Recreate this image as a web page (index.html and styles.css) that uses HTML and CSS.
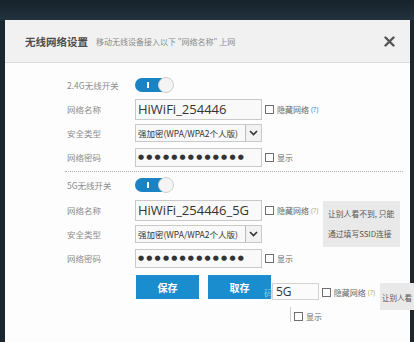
FILE: index.html
```html
<!DOCTYPE html>
<html lang="zh-CN">
<head>
    <meta charset="UTF-8">
    <meta name="viewport" content="width=device-width, initial-scale=1.0">
    <title>无线网络设置</title>
    <link rel="stylesheet" href="styles.css">
</head>
<body>
    <div class="dialog">
        <div class="dialog-head">
            <span class="dialog-title">无线网络设置</span>
            <span class="dialog-sub">移动无线设备接入以下 "网络名称" 上网</span>
            <button class="dialog-close" type="button">
                <svg width="11" height="11" viewBox="0 0 11 11"><path d="M1.5 1.5 L9.5 9.5 M9.5 1.5 L1.5 9.5" stroke="#555" stroke-width="2.4" stroke-linecap="round"/></svg>
            </button>
        </div>
        <div class="dialog-body">
            <div class="row row-switch">
                <span class="label">2.4G无线开关</span>
                <span class="toggle"></span>
            </div>
            <div class="row">
                <span class="label">网络名称</span>
                <input class="field field-name" type="text" value="HiWiFi_254446">
                <label class="check"><span class="box"></span>隐藏网络<span class="hint">(?)</span></label>
            </div>
            <div class="row">
                <span class="label">安全类型</span>
                <div class="select"><span class="select-text">强加密(WPA/WPA2个人版)</span><span class="select-arrow"><svg width="9" height="6" viewBox="0 0 9 6"><path d="M1 1 L4.5 4.5 L8 1" fill="none" stroke="#333" stroke-width="1.6"/></svg></span></div>
            </div>
            <div class="row">
                <span class="label">网络密码</span>
                <div class="field field-pass">●●●●●●●●●●●●●</div>
                <label class="check"><span class="box"></span>显示</label>
            </div>

            <div class="divider"></div>

            <div class="row row-switch row-switch-5g">
                <span class="label">5G无线开关</span>
                <span class="toggle"></span>
            </div>
            <div class="row row-tip">
                <span class="label">网络名称</span>
                <input class="field field-name" type="text" value="HiWiFi_254446_5G">
                <label class="check"><span class="box"></span>隐藏网络<span class="hint hint-alt">(?)</span></label>
                <div class="tooltip">让别人看不到, 只能<br>通过填写SSID连接</div>
            </div>
            <div class="row">
                <span class="label">安全类型</span>
                <div class="select"><span class="select-text">强加密(WPA/WPA2个人版)</span><span class="select-arrow"><svg width="9" height="6" viewBox="0 0 9 6"><path d="M1 1 L4.5 4.5 L8 1" fill="none" stroke="#333" stroke-width="1.6"/></svg></span></div>
            </div>
            <div class="row">
                <span class="label">网络密码</span>
                <div class="field field-pass">●●●●●●●●●●●●●</div>
                <label class="check"><span class="box"></span>显示</label>
            </div>

            <div class="actions">
                <button class="btn" type="button">保存</button>
                <button class="btn" type="button">取存</button>
            </div>
        </div>

        <!-- leftover of the previous frame drawn over the buttons -->
        <div class="ghost">
            <div class="ghost-row">
                <span class="ghost-glyph">码</span>
                <div class="ghost-field">5G</div>
                <label class="check"><span class="box"></span>隐藏网络<span class="hint hint-alt">(?)</span></label>
                <div class="ghost-tip">让别人看</div>
            </div>
            <div class="ghost-row ghost-row-2">
                <div class="ghost-edge"></div>
                <label class="check"><span class="box"></span>显示</label>
            </div>
        </div>
    </div>
</body>
</html>
```

FILE: styles.css
```css
body {
    margin: 0;
    height: 342px;
    overflow: hidden;
    background: linear-gradient(#16222c, #22323d 20px, #1a2630 21px);
    font-family: "Noto Sans CJK SC", "Noto Sans", sans-serif;
}
.dialog {
    position: relative;
    margin: 20px 4px 0 5px;
    height: 330px;
    background: #fdfdfd;
}
.dialog-head {
    display: flex;
    align-items: center;
    height: 43px;
    box-sizing: border-box;
    padding-left: 20px;
    background: #f1f1f1;
    border-bottom: 1px solid #dadada;
}
.dialog-title {
    font-size: 10.5px;
    font-weight: bold;
    color: #4d4d4d;
}
.dialog-sub {
    margin-left: 8px;
    font-size: 8px;
    color: #8a8a8a;
    white-space: nowrap;
}
.dialog-close {
    margin-left: auto;
    margin-right: 15px;
    padding: 0;
    border: none;
    background: none;
    display: flex;
}
.dialog-body {
    padding: 10px 0 0 62px;
}
.row {
    display: flex;
    align-items: center;
    height: 24px;
}
.row-switch-5g {
    height: 26px;
}
.row-tip {
    position: relative;
}
.label {
    width: 68px;
    flex: none;
    font-size: 8.5px;
    color: #8c8c8c;
}
.toggle {
    position: relative;
    width: 38px;
    height: 14px;
    border-radius: 7px;
    background: #1a83c3;
}
.toggle::before {
    content: "";
    position: absolute;
    left: 12px;
    top: 4px;
    width: 2px;
    height: 6px;
    background: #fff;
}
.toggle::after {
    content: "";
    position: absolute;
    right: -1px;
    top: -1px;
    width: 14px;
    height: 14px;
    border-radius: 50%;
    background: #f4f4f4;
    border: 1px solid #cfcfcf;
}
.field {
    box-sizing: border-box;
    width: 127px;
    margin: 0;
    border: 1px solid #c9c9c9;
    background: #f9f9f9;
    color: #333;
    padding: 0 2px;
}
.field-name {
    height: 21px;
    font-family: "Open Sans", sans-serif;
    font-size: 13px;
}
.field-pass {
    height: 19px;
    line-height: 17px;
    font-family: "DejaVu Sans", sans-serif;
    font-size: 7px;
    letter-spacing: 2.2px;
    overflow: hidden;
    white-space: nowrap;
}
.select {
    display: flex;
    align-items: center;
    box-sizing: border-box;
    width: 127px;
    height: 18px;
    border: 1px solid #c9c9c9;
    background: #f9f9f9;
}
.select-text {
    flex: 1;
    padding-left: 2px;
    font-size: 8.5px;
    color: #333;
    white-space: nowrap;
    overflow: hidden;
}
.select-arrow {
    display: flex;
    align-items: center;
    justify-content: center;
    width: 15px;
    height: 16px;
    border-left: 1px solid #bbb;
    background: #f2f2f2;
}
.check {
    display: flex;
    align-items: center;
    margin-left: 3px;
    font-size: 8px;
    color: #666;
    white-space: nowrap;
}
.box {
    width: 7px;
    height: 7px;
    margin-right: 3px;
    border: 1px solid #6f6f6f;
    background: #fff;
}
.hint {
    margin-left: 2px;
    font-family: "Noto Sans", sans-serif;
    font-size: 7px;
    color: #3d8fcf;
}
.hint-alt {
    color: #b5b36a;
}
.tooltip {
    position: absolute;
    left: 256px;
    top: 3px;
    width: 77px;
    height: 46px;
    box-sizing: border-box;
    padding: 3px 0 0 5px;
    background: #e9e9e9;
    font-size: 7.8px;
    line-height: 20px;
    color: #555;
    white-space: nowrap;
}
.divider {
    width: 338px;
    margin: 2px 0 0 -2px;
    border-top: 1px dotted #b5b5b5;
}
.actions {
    display: flex;
    gap: 9px;
    margin: 5px 0 0 69px;
}
.btn {
    width: 63px;
    height: 24px;
    padding: 0;
    border: none;
    background: #1a8dce;
    color: #fff;
    font-family: "Noto Sans CJK SC", sans-serif;
    font-size: 10px;
    font-weight: bold;
}
.ghost {
    position: absolute;
    left: 259px;
    top: 263px;
    width: 150px;
}
.ghost-row {
    display: flex;
    align-items: flex-start;
}
.ghost-glyph {
    width: 8px;
    margin-top: 4px;
    font-size: 9px;
    color: #9cc3dd;
    overflow: hidden;
}
.ghost-field {
    box-sizing: border-box;
    width: 47px;
    height: 17px;
    padding-left: 3px;
    border: 1px solid #d2d2d2;
    background: #fbfbfb;
    font-family: "Open Sans", sans-serif;
    font-size: 12px;
    line-height: 15px;
    color: #333;
}
.ghost-row .check {
    margin-top: 4px;
}
.ghost-tip {
    width: 34px;
    height: 27px;
    margin-left: 5px;
    padding: 9px 0 0 2px;
    box-sizing: border-box;
    background: #e9e9e9;
    font-size: 7.5px;
    color: #555;
    white-space: nowrap;
    overflow: hidden;
}
.ghost-row-2 {
    margin-top: -3px;
}
.ghost-edge {
    width: 26px;
    height: 15px;
    border-right: 1px solid #cfcfcf;
}
.ghost-row-2 .check {
    margin-top: 4px;
}
```
